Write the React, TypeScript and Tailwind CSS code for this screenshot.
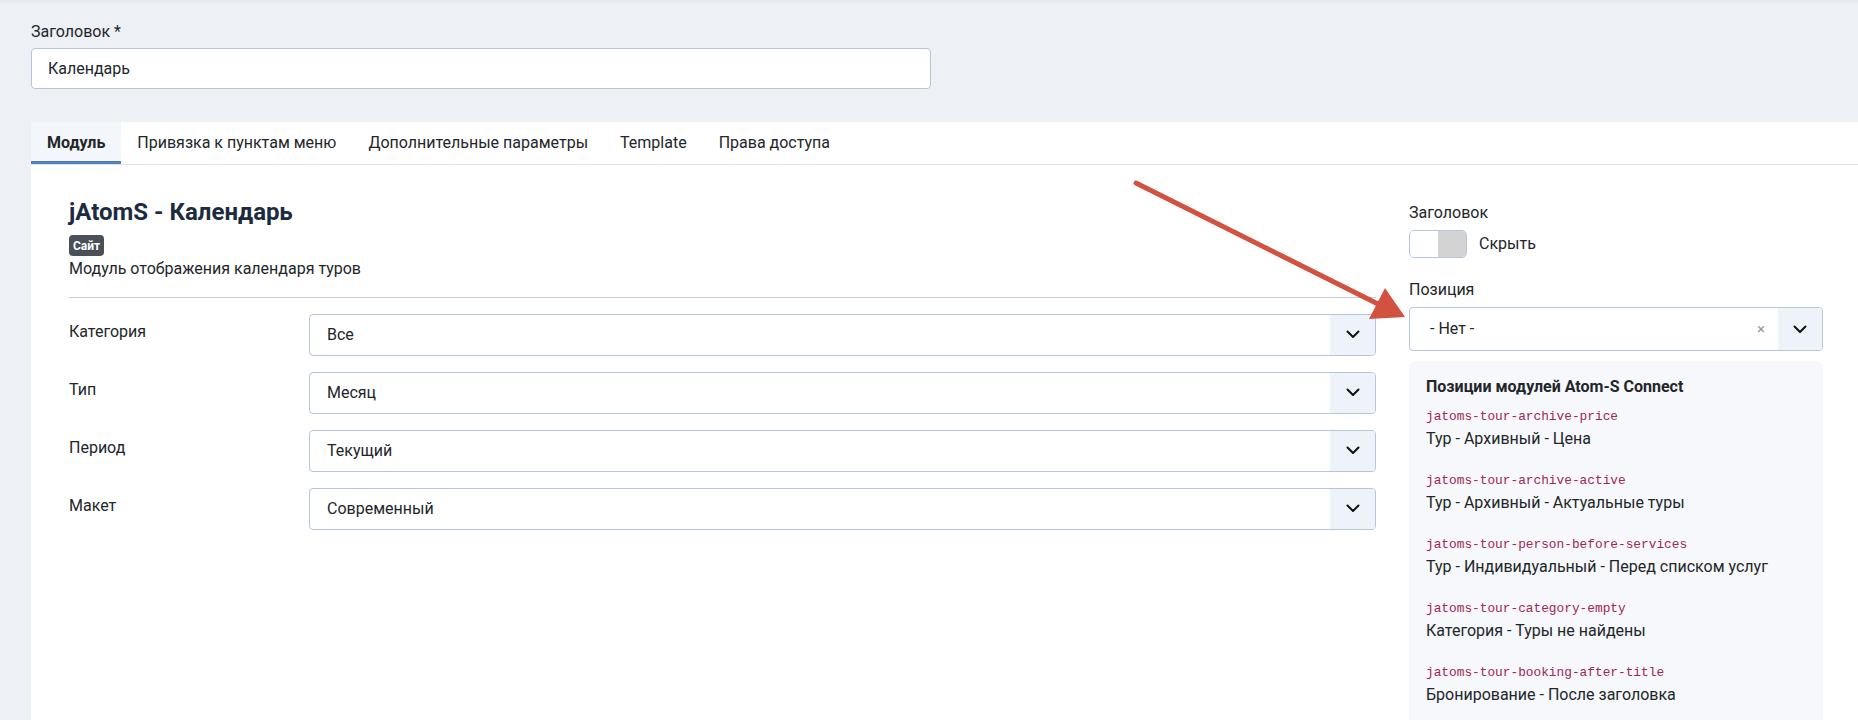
import React from 'react';

const tabs = ['Модуль', 'Привязка к пунктам меню', 'Дополнительные параметры', 'Template', 'Права доступа'];

const fields = [
  { label: 'Категория', value: 'Все' },
  { label: 'Тип', value: 'Месяц' },
  { label: 'Период', value: 'Текущий' },
  { label: 'Макет', value: 'Современный' },
];

const positions = [
  { code: 'jatoms-tour-archive-price', text: 'Тур - Архивный - Цена' },
  { code: 'jatoms-tour-archive-active', text: 'Тур - Архивный - Актуальные туры' },
  { code: 'jatoms-tour-person-before-services', text: 'Тур - Индивидуальный - Перед списком услуг' },
  { code: 'jatoms-tour-category-empty', text: 'Категория - Туры не найдены' },
  { code: 'jatoms-tour-booking-after-title', text: 'Бронирование - После заголовка' },
];

function Chevron() {
  return (
    <svg width="14" height="9" viewBox="0 0 14 9" fill="none">
      <path d="M1.5 1.5l5.5 5.5 5.5-5.5" stroke="#111" strokeWidth="2" strokeLinecap="round" strokeLinejoin="round" />
    </svg>
  );
}

function Select({ value }: { value: string }) {
  return (
    <div className="flex h-[42px] flex-1 overflow-hidden rounded-[4px] border border-[#b7c5d9] bg-white">
      <div className="flex flex-1 items-center pl-[17px] text-[16px]">{value}</div>
      <div className="flex w-[45px] items-center justify-center bg-[#eef3fa]">
        <Chevron />
      </div>
    </div>
  );
}

export default function App() {
  return (
    <div className="relative min-h-screen overflow-hidden bg-[#edf1f6] font-['Roboto',sans-serif] text-[#22262a]">
      <div className="h-[4px] bg-gradient-to-b from-[#e2e7ed] to-[#edf1f6]" />

      {/* Title field */}
      <div className="pl-[31px] pt-[16px]">
        <div className="text-[16px] leading-[24px]">Заголовок *</div>
        <div className="mt-[4px] flex h-[41px] w-[900px] items-center rounded-[4px] border border-[#b7c5d9] bg-white pl-[16px] text-[16px]">
          Календарь
        </div>
      </div>

      {/* Tabs */}
      <div className="ml-[31px] mt-[33px] flex h-[43px] border-b border-[#dde3ea] bg-white">
        {tabs.map((t, i) => (
          <div
            key={t}
            className={`flex items-center px-[16px] text-[16px] ${
              i === 0 ? 'border-b-[3px] border-[#4f7ec2] bg-[#f3f6fa] pt-[3px] font-bold' : ''
            }`}
          >
            {t}
          </div>
        ))}
      </div>

      {/* Content */}
      <div className="ml-[31px] flex min-h-[560px] gap-[33px] bg-white pl-[38px] pr-[35px]">
        <div className="flex-1 pt-[33px]">
          <h2 className="text-[24px] font-bold leading-[28px] text-[#1c2b40]">jAtomS - Календарь</h2>
          <span className="mt-[9px] inline-flex h-[21px] items-center rounded-[4px] bg-[#495057] px-[4px] text-[12px] font-bold text-white">
            Сайт
          </span>
          <div className="text-[16px] leading-[24px]">Модуль отображения календаря туров</div>
          <div className="mt-[16px] border-t border-[#c9cdd2]" />
          <div className="mt-[16px] flex flex-col gap-[16px]">
            {fields.map((f) => (
              <div key={f.label} className="flex">
                <div className="w-[240px] pt-[6px] text-[16px] leading-[24px]">{f.label}</div>
                <Select value={f.value} />
              </div>
            ))}
          </div>
        </div>

        <div className="w-[414px] pt-[36px]">
          <div className="text-[16px] leading-[24px]">Заголовок</div>
          <div className="mt-[5px] flex items-center">
            <div className="flex h-[28px] w-[58px] overflow-hidden rounded-[5px] border border-[#b7c5d9]">
              <div className="flex-1 bg-white" />
              <div className="flex-1 bg-[#d3d3d3]" />
            </div>
            <span className="ml-[12px] text-[16px]">Скрыть</span>
          </div>
          <div className="mt-[20px] text-[16px] leading-[24px]">Позиция</div>
          <div className="mt-[5px] flex h-[44px] overflow-hidden rounded-[4px] border border-[#b7c5d9] bg-white">
            <div className="flex flex-1 items-center pl-[20px] text-[16px]">- Нет -</div>
            <div className="flex w-[34px] items-center justify-center text-[15px] text-[#9a9a9a]">×</div>
            <div className="flex w-[44px] items-center justify-center bg-[#eef3fa]">
              <Chevron />
            </div>
          </div>
          <div className="mt-[10px] rounded-t-[6px] bg-[#f6f8fb] pl-[17px] pt-[14px] pb-[40px]">
            <div className="text-[16px] font-bold leading-[24px]">Позиции модулей Atom-S Connect</div>
            <div className="mt-[7px]">
              {positions.map((p) => (
                <div key={p.code} className="mb-[19px]">
                  <div className="font-['Liberation_Mono',monospace] text-[12.8px] leading-[21px] text-[#a0245a]">{p.code}</div>
                  <div className="text-[16px] leading-[24px]">{p.text}</div>
                </div>
              ))}
            </div>
          </div>
        </div>
      </div>

      {/* Red annotation arrow */}
      <svg className="pointer-events-none absolute left-0 top-0" width="1858" height="720">
        <line x1="1136" y1="183" x2="1380" y2="305" stroke="#d35141" strokeWidth="5" strokeLinecap="round" />
        <polygon points="1405,317 1369,319 1385,288" fill="#d35141" />
      </svg>
    </div>
  );
}
